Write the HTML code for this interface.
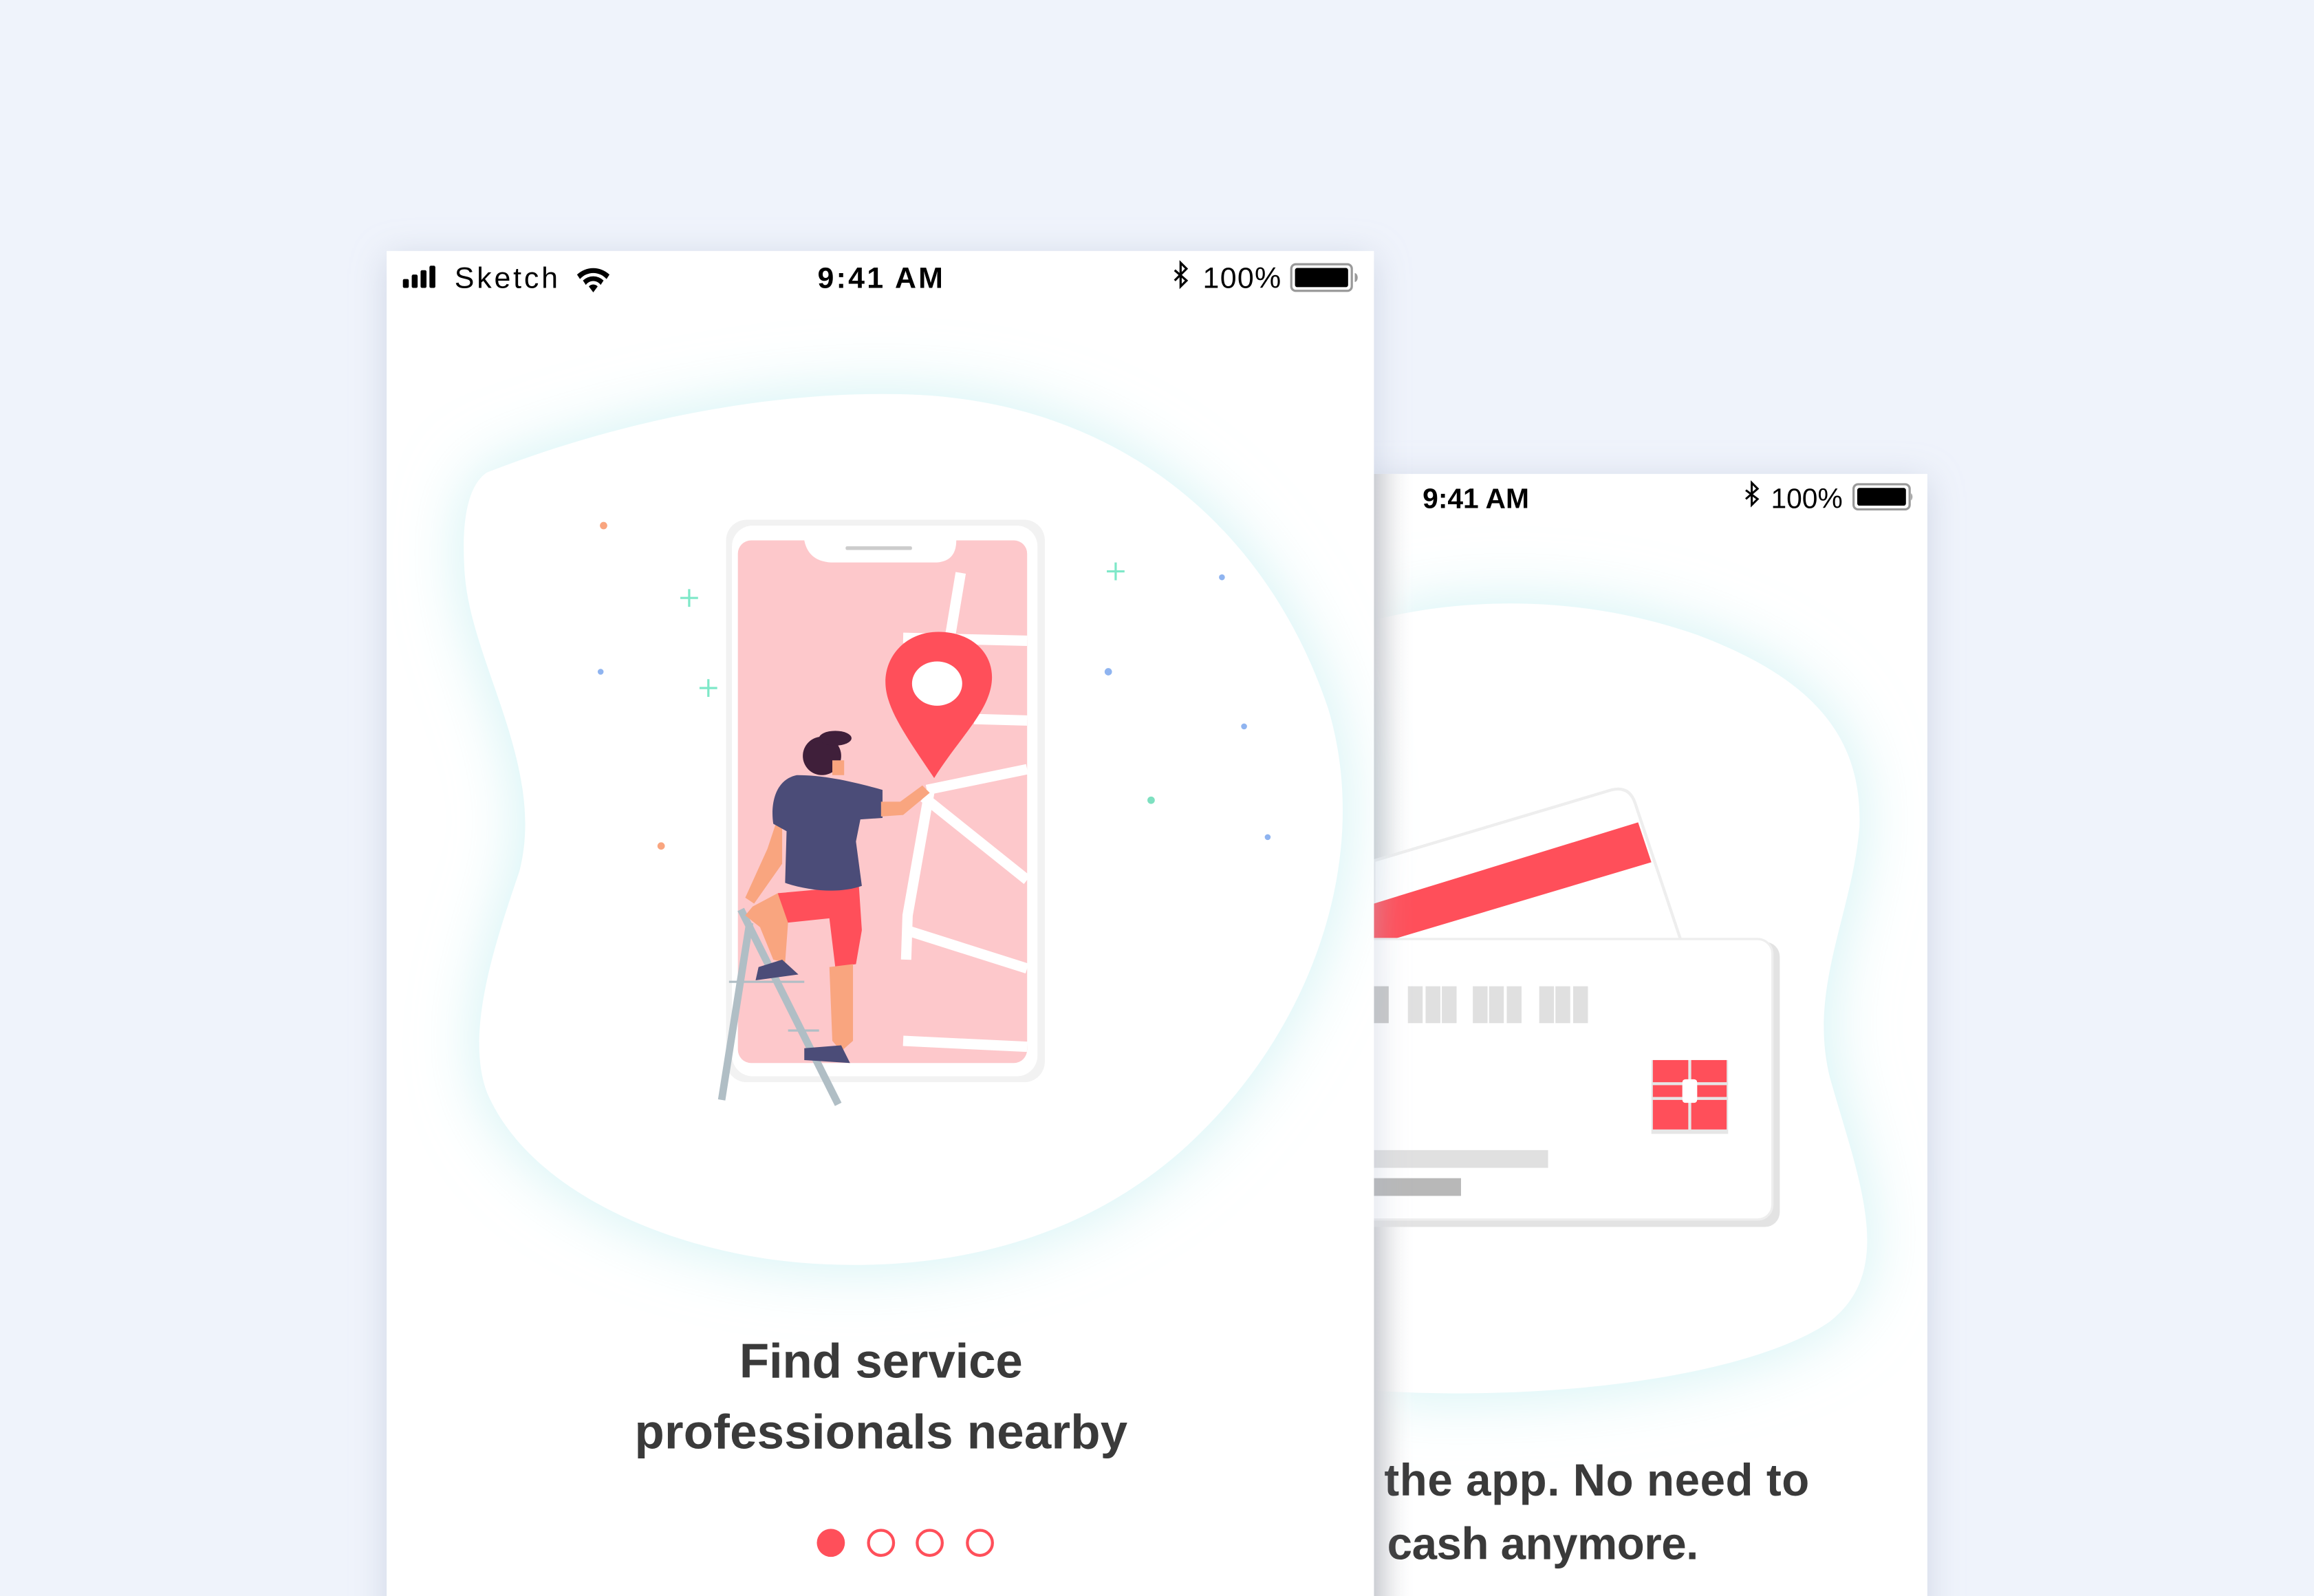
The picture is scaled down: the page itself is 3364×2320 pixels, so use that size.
<!DOCTYPE html>
<html><head><meta charset="utf-8"><style>
html,body{margin:0;padding:0;background:#eff3fb;}
svg{display:block}
text{font-family:"Liberation Sans",sans-serif;}
</style></head><body>
<svg width="3364" height="2320" viewBox="0 0 1568 1081" preserveAspectRatio="none" xmlns="http://www.w3.org/2000/svg">
<defs>
<filter id="sh" x="-20%" y="-20%" width="140%" height="140%"><feDropShadow dx="0" dy="4" stdDeviation="12" flood-color="#a9b3cc" flood-opacity="0.45"/></filter>
<filter id="glow" x="-30%" y="-30%" width="160%" height="160%"><feDropShadow dx="0" dy="0" stdDeviation="22" flood-color="#bfeef0" flood-opacity="0.75"/></filter>
<linearGradient id="lsh" x1="0" x2="1"><stop offset="0" stop-color="#d6d6d6"/><stop offset="1" stop-color="#ffffff" stop-opacity="0"/></linearGradient>
</defs>
<rect width="1568" height="1081" fill="#eff3fb"/>

<!-- right phone -->
<rect x="860" y="321" width="446" height="800" fill="#fff" filter="url(#sh)"/>
<path d="M931 420 C990 405 1070 402 1150 430 C1230 460 1262 500 1260 560 C1255 620 1225 670 1240 730 C1260 800 1285 860 1240 895 C1190 930 1060 950 931 942 Z" fill="#fff" filter="url(#glow)"/>
<rect x="931" y="321" width="28" height="760" fill="url(#lsh)"/>
<text x="964" y="344" font-size="19" font-weight="bold" fill="#000">9:41 AM</text>
<path d="M1183 332 L1191 338 L1187 342 L1187 327 L1191 331 L1183 338" fill="none" stroke="#000" stroke-width="1.4"/>
<text x="1200" y="344" font-size="19" fill="#000">100%</text>
<rect x="1256" y="328" width="38" height="17" rx="3" fill="none" stroke="#999" stroke-width="1.5"/>
<rect x="1258.5" y="330.5" width="33" height="12" rx="1.5" fill="#000"/>
<path d="M1295 334 a2 3 0 0 1 0 5 Z" fill="#999"/>
<!-- cards -->
<path d="M931 583 L1092 535 Q1104 532 1108 544 L1140 640 L931 640 Z" fill="#fff" stroke="#eee" stroke-width="2"/>
<path d="M931 612 L1110 557 L1119 584 L931 640 Z" fill="#ff4f5a"/>
<rect x="880" y="638" width="326" height="193" rx="10" fill="#e3e3e3"/>
<rect x="880" y="636" width="321" height="190" rx="10" fill="#fff" stroke="#eee" stroke-width="1.5"/>
<g fill="#e0e0e0">
<rect x="931" y="668" width="10" height="25" fill="#c8c8c8"/>
<rect x="954" y="668" width="10" height="25"/><rect x="966" y="668" width="10" height="25"/><rect x="977" y="668" width="10" height="25"/>
<rect x="998" y="668" width="10" height="25"/><rect x="1009" y="668" width="10" height="25"/><rect x="1021" y="668" width="10" height="25"/>
<rect x="1043" y="668" width="10" height="25"/><rect x="1054" y="668" width="10" height="25"/><rect x="1066" y="668" width="10" height="25"/>
</g>
<rect x="1119" y="718" width="52" height="50" fill="#e6e6e6"/>
<g fill="#ff4f5a">
<rect x="1120" y="718" width="24" height="15"/><rect x="1146" y="718" width="24" height="15"/>
<rect x="1120" y="735" width="20" height="8"/><rect x="1150" y="735" width="20" height="8"/>
<rect x="1120" y="745" width="24" height="20"/><rect x="1146" y="745" width="24" height="20"/>
</g>
<rect x="1140" y="731" width="10" height="16" rx="2" fill="#fff"/>
<rect x="931" y="779" width="118" height="12" fill="#e0e0e0"/>
<rect x="931" y="798" width="59" height="12" fill="#b8b8b8"/>
<text x="938" y="1013" font-size="30.5" font-weight="bold" fill="#3a3a3a" textLength="288">the app. No need to</text>
<text x="940" y="1056" font-size="30.5" font-weight="bold" fill="#3a3a3a" textLength="211">cash anymore.</text>

<!-- left phone -->
<rect x="262" y="170" width="669" height="960" fill="#fff" filter="url(#sh)"/>
<path d="M330 320 C420 285 520 265 610 267 C760 270 860 360 900 480 C930 580 890 700 800 780 C720 850 620 862 540 855 C460 848 360 810 330 740 C315 700 335 640 352 590 C370 520 320 450 315 390 C312 350 318 328 330 320 Z" fill="#fff" filter="url(#glow)"/>
<!-- status -->
<g fill="#000"><rect x="273" y="189" width="4" height="6" rx="1"/><rect x="279" y="186" width="4" height="9" rx="1"/><rect x="285" y="183" width="4" height="12" rx="1"/><rect x="291" y="180" width="4" height="15" rx="1"/></g>
<text x="308" y="195" font-size="20" fill="#000" textLength="70">Sketch</text>
<path d="M391 186 a16 16 0 0 1 22 0 l-2 3 a12 12 0 0 0 -18 0 Z M395 190 a10 10 0 0 1 14 0 l-2 3 a6 6 0 0 0 -10 0 Z M399 194 a4 4 0 0 1 6 0 l-3 4 Z" fill="#000"/>
<text x="554" y="195" font-size="20" font-weight="bold" fill="#000" textLength="85">9:41 AM</text>
<path d="M796 183 L804 190 L800 194 L800 178 L804 182 L796 190" fill="none" stroke="#000" stroke-width="1.5"/>
<text x="815" y="195" font-size="20" fill="#000" textLength="53">100%</text>
<rect x="875" y="179" width="41" height="18" rx="3" fill="none" stroke="#999" stroke-width="1.5"/>
<rect x="877.5" y="181.5" width="36" height="13" rx="1.5" fill="#000"/>
<path d="M918 185 a2 3 0 0 1 0 6 Z" fill="#999"/>
<!-- illustration -->
<rect x="492" y="352" width="216" height="381" rx="14" fill="#f2f2f2"/>
<rect x="496" y="356" width="207" height="373" rx="14" fill="#fff"/>
<rect x="500" y="366" width="196" height="354" rx="9" fill="#fdc8cb"/>
<path d="M545 366 Q548 381 565 381 L633 381 Q648 381 648 366 Z" fill="#fff"/>
<rect x="573" y="370" width="45" height="2.5" rx="1" fill="#ccc"/>
<g stroke="#fff" fill="none" stroke-width="7">
<path d="M651 388 L644 430"/><path d="M612 432 L696 434"/><path d="M660 487 L696 488"/>
<path d="M628 535 L696 521"/><path d="M626 540 L696 596"/>
<path d="M630 535 L615 620 L614 650"/><path d="M614 630 L696 656"/><path d="M612 705 L696 709"/>
</g>
<path d="M636 428 C660 428 674 444 672 462 C670 482 650 500 633 527 C615 500 600 480 600 462 C600 444 614 428 636 428 Z" fill="#ff4f5a"/>
<ellipse cx="635" cy="463" rx="17" ry="15" fill="#fff"/>
<!-- ladder -->
<g stroke="#b0bec5" stroke-width="5" fill="none">
<path d="M502 616 L568 748"/><path d="M508 625 L489 745"/>
</g>
<g stroke="#b0bec5" stroke-width="1.5"><path d="M494 665 L545 665"/><path d="M534 698 L555 698"/></g>
<!-- person -->
<path d="M527 605 L533 625 L562 622 L566 655 L580 653 L584 630 L582 600 Z" fill="#ff4f5a"/>
<path d="M562 655 L564 705 L570 712 L578 705 L578 653 Z" fill="#f9a57f"/>
<path d="M545 710 L570 708 L576 720 L545 718 Z" fill="#4b4c78"/>
<path d="M527 605 L510 614 L505 620 L515 628 L524 650 L532 652 L534 625 Z" fill="#f9a57f"/>
<path d="M514 655 L530 650 L541 660 L512 664 Z" fill="#4b4c78"/>
<path d="M530 545 L520 575 L505 608 L511 612 L530 585 Z" fill="#f9a57f"/>
<path d="M540 525 C525 528 522 545 524 558 L533 563 L532 598 C550 604 570 605 584 600 L580 570 L583 555 L598 554 L598 535 C580 530 560 525 540 525 Z" fill="#4b4c78"/>
<path d="M597 543 L610 543 L625 532 L630 537 L612 552 L597 553 Z" fill="#f9a57f"/>
<circle cx="557" cy="512" r="13" fill="#3f1f3a"/>
<ellipse cx="566" cy="500" rx="11" ry="5" fill="#3f1f3a"/>
<rect x="564" y="515" width="8" height="10" fill="#f9a57f"/>
<!-- decorations -->
<circle cx="409" cy="356" r="2.5" fill="#f9a57f"/><circle cx="448" cy="573" r="2.5" fill="#f9a57f"/>
<circle cx="751" cy="455" r="2.5" fill="#8fb4f0"/><circle cx="780" cy="542" r="2.5" fill="#7ee0c0"/>
<g fill="#8fb4f0"><circle cx="407" cy="455" r="2"/><circle cx="828" cy="391" r="2"/><circle cx="843" cy="492" r="2"/><circle cx="859" cy="567" r="2"/></g>
<g stroke="#7ee8c8" stroke-width="1.5"><path d="M467 399v12M461 405h12"/><path d="M480 460v12M474 466h12"/><path d="M756 381v12M750 387h12"/></g>
<!-- text -->
<text x="597" y="933" font-size="33" font-weight="bold" fill="#3a3a3a" text-anchor="middle" textLength="192">Find service</text>
<text x="597" y="981" font-size="33" font-weight="bold" fill="#3a3a3a" text-anchor="middle" textLength="334">professionals nearby</text>
<circle cx="563" cy="1045" r="9.5" fill="#ff4f5a"/>
<g fill="none" stroke="#ff4f5a" stroke-width="2"><circle cx="597" cy="1045" r="8.5"/><circle cx="630" cy="1045" r="8.5"/><circle cx="664" cy="1045" r="8.5"/></g>
</svg>
</body></html>
